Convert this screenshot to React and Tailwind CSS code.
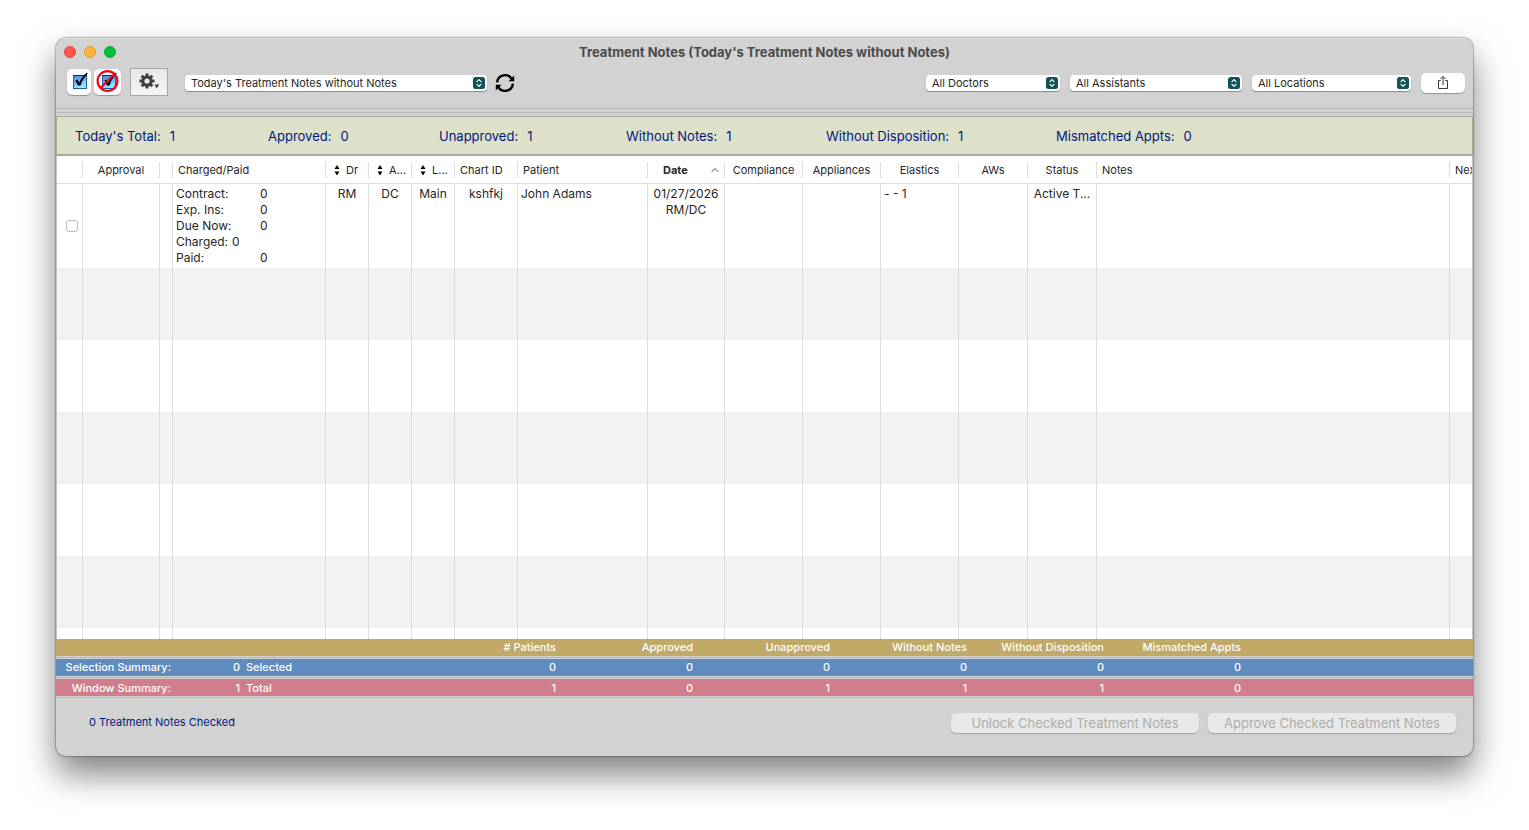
import { useState } from "react";
import clsx from "clsx";

const totals = [
  { label: "Today's Total:", value: 1, width: "w-[193px]" },
  { label: "Approved:", value: 0, width: "w-[171px]" },
  { label: "Unapproved:", value: 1, width: "w-[187px]" },
  { label: "Without Notes:", value: 1, width: "w-[200px]" },
  { label: "Without Disposition:", value: 1, width: "w-[230px]" },
  { label: "Mismatched Appts:", value: 0, width: "w-[140px]" },
];

const columns = [
  { key: "check", label: "", width: "w-[26px]" },
  { key: "approval", label: "Approval", width: "w-[77px]", align: "justify-center" },
  { key: "flag", label: "", width: "w-[13px]" },
  { key: "charged", label: "Charged/Paid", width: "w-[153px]" },
  { key: "dr", label: "Dr", width: "w-[43px]", sortable: true },
  { key: "assistant", label: "A...", width: "w-[43px]", sortable: true },
  { key: "location", label: "L...", width: "w-[43px]", sortable: true },
  { key: "chart", label: "Chart ID", width: "w-[63px]" },
  { key: "patient", label: "Patient", width: "w-[130px]" },
  { key: "date", label: "Date", width: "w-[77px]", sorted: true },
  { key: "compliance", label: "Compliance", width: "w-[78px]", align: "justify-center" },
  { key: "appliances", label: "Appliances", width: "w-[78px]", align: "justify-center" },
  { key: "elastics", label: "Elastics", width: "w-[78px]", align: "justify-center" },
  { key: "aws", label: "AWs", width: "w-[69px]", align: "justify-center" },
  { key: "status", label: "Status", width: "w-[69px]", align: "justify-center" },
  { key: "notes", label: "Notes", width: "" },
  { key: "next", label: "Next", width: "w-[22px]" },
];

const charges = [
  { label: "Contract:", value: 0 },
  { label: "Exp. Ins:", value: 0 },
  { label: "Due Now:", value: 0 },
  { label: "Charged:", value: 0, inline: true },
  { label: "Paid:", value: 0 },
];

const summaryHeads = ["# Patients", "Approved", "Unapproved", "Without Notes", "Without Disposition", "Mismatched Appts"];

const summaryRows = [
  { label: "Selection Summary:", count: 0, unit: "Selected", values: [0, 0, 0, 0, 0, 0], color: "bg-[#5f8bbe] pb-0.5" },
  { label: "Window Summary:", count: 1, unit: "Total", values: [1, 0, 1, 1, 1, 0], color: "bg-[#d07e8b]" },
];

function CheckIcon({ blocked }) {
  return (
    <svg viewBox="0 0 24 24" className="size-6 shrink-0" aria-hidden="true">
      <defs>
        <linearGradient id="checkFill" x1="0" y1="0" x2="0.3" y2="1">
          <stop offset="0" stopColor="#4a86dc" />
          <stop offset="0.5" stopColor="#63b4f4" />
          <stop offset="1" stopColor="#8ff0fc" />
        </linearGradient>
      </defs>
      <rect x="6.5" y="5.5" width="13" height="13" fill="url(#checkFill)" stroke="#2d5f9e" strokeWidth="1" />
      <path d="M6 5.5h14" stroke="#16235c" strokeWidth="1.2" />
      <path d="M8.400 10.600l2-1 1.800 3.200c1.600-4 4.200-7.400 7.600-10l1 .7c-3.400 3.400-5.800 7.200-7.300 12h-2.500z" fill="#000" />
      {blocked && (
        <g fill="none" stroke="#f5051d" strokeWidth="2.2">
          <circle cx="11.5" cy="11" r="9.900" />
          <path d="M18.500 4l-14 14" />
        </g>
      )}
    </svg>
  );
}

function GearIcon() {
  return (
    <svg viewBox="0 0 24 20" className="h-5 w-6" fill="#3f3f3f" aria-hidden="true">
      <circle cx="10" cy="9" r="4.1" fill="none" stroke="#3f3f3f" strokeWidth="3" />
      {[0, 45, 90, 135, 180, 225, 270, 315].map((angle) => (
        <rect key={angle} x="8.5" y="1.5" width="3" height="3.2" transform={`rotate(${angle} 10 9)`} />
      ))}
      <path d="M17.5 12.5h4.600l-2.300 4z" />
    </svg>
  );
}

function RefreshIcon() {
  return (
    <svg viewBox="0 0 20 20" className="size-5" aria-hidden="true">
      <g fill="none" stroke="#000" strokeWidth="2.4">
        <path d="M2.1 9.300a7.900 7.900 0 0 1 14.700-3.200" />
        <path d="M17.900 10.700a7.900 7.900 0 0 1-14.700 3.200" />
      </g>
      <path d="M19.2 2.500v5.700h-5.700zM.8 17.500v-5.700h5.700z" />
    </svg>
  );
}

function ShareIcon() {
  return (
    <svg viewBox="0 0 14 16" className="h-4 w-3.5" fill="none" stroke="#3a3a3a" strokeWidth="1" aria-hidden="true">
      <path d="M4.800 5.500H2.500v8h9v-8H9.200M7 10V1.500M4.500 4L7 1.500 9.500 4" />
    </svg>
  );
}

function PopUp({ label, value, width }) {
  return (
    <div className={clsx("relative h-4", width)}>
      <select
        aria-label={label}
        defaultValue={value}
        className="block h-4 w-full appearance-none rounded-[4px] bg-white pl-1.5 pr-5 text-[11px] leading-4 text-[#262626] shadow-[0_1px_1px_rgba(0,0,0,0.35)]"
      >
        <option>{value}</option>
      </select>
      <svg viewBox="0 0 12 12" className="pointer-events-none absolute right-0.5 top-0.5 size-3" aria-hidden="true">
        <rect width="12" height="12" rx="2.5" fill="#125456" />
        <path d="M4 4.700l2-2 2 2M4 7.300l2 2 2-2" fill="none" stroke="#fff" strokeWidth="1.2" strokeLinecap="round" strokeLinejoin="round" />
      </svg>
    </div>
  );
}

function ColumnHead({ column }) {
  const { label, align, sortable, sorted, key } = column;

  return (
    <th scope="col" className="h-7 overflow-hidden border-b border-[#dedede] p-0 font-normal">
      <div
        className={clsx(
          "flex h-4 items-center whitespace-nowrap",
          key !== "next" && "border-r border-[#dedede]",
          align,
          !align && !sorted && !sortable && "pl-[5px]",
          sortable && "gap-1.5 pl-2",
          sorted && "justify-between pl-[15px] pr-1 font-bold"
        )}
      >
        {sortable && (
          <svg viewBox="0 0 6 12" className="h-3 w-1.5 shrink-0" aria-hidden="true">
            <path d="M3 1l2.500 4h-5zM3 11.500l2.500-4h-5z" />
          </svg>
        )}
        {label}
        {sorted && (
          <svg viewBox="0 0 10 8" className="h-2 w-2.5" fill="none" stroke="#555" aria-hidden="true">
            <path d="M1.500 6L5 2.500 8.500 6" />
          </svg>
        )}
      </div>
    </th>
  );
}

function NotesTable({ checked, onCheck }) {
  const cell = "overflow-hidden whitespace-nowrap border-r border-[#dedede] px-0 pb-0 pt-0.5 align-top last:border-r-0";

  return (
    <div className="min-h-0 flex-1 overflow-hidden border-x border-[#c4c4c4] bg-white">
      <table className="w-full table-fixed border-separate border-spacing-0 text-xs leading-4 text-[#262626]">
        <colgroup>
          {columns.map((column) => (
            <col key={column.key} className={column.width} />
          ))}
        </colgroup>
        <thead className="text-[11px]">
          <tr>
            {columns.map((column) => (
              <ColumnHead key={column.key} column={column} />
            ))}
          </tr>
        </thead>
        <tbody>
          <tr className="h-[84px]">
            <td className="border-r border-[#dedede] p-0 pl-[9px] align-middle">
              <input
                type="checkbox"
                aria-label="Select John Adams"
                checked={checked}
                onChange={(e) => onCheck(e.target.checked)}
                className="block size-3 appearance-none rounded-[3px] border border-[#bdbdbd] bg-white checked:bg-[#125456]"
              />
            </td>
            <td className={cell} />
            <td className={cell} />
            <td className={cell}>
              {charges.map((charge) => (
                <div key={charge.label} className="flex pl-[3px]">
                  <span className={charge.inline ? "w-14" : "w-[84px]"}>{charge.label}</span>
                  <span>{charge.value}</span>
                </div>
              ))}
            </td>
            <td className={clsx(cell, "text-center")}>RM</td>
            <td className={clsx(cell, "text-center")}>DC</td>
            <td className={clsx(cell, "text-center")}>Main</td>
            <td className={clsx(cell, "text-center")}>kshfkj</td>
            <td className={cell}>
              <span className="pl-[3px]">John Adams</span>
            </td>
            <td className={clsx(cell, "text-center")}>
              01/27/2026
              <br />
              RM/DC
            </td>
            <td className={cell} />
            <td className={cell} />
            <td className={cell}>
              <span className="pl-[3px]">- - 1</span>
            </td>
            <td className={cell} />
            <td className={clsx(cell, "text-center")}>Active T...</td>
            <td className={cell} />
            <td className={cell} />
          </tr>
          {/* empty striped rows fill whatever height is left */}
          {Array.from({ length: 20 }, (_, i) => (
            <tr key={i} className="h-[72px] odd:bg-white even:bg-[#f1f3f2]">
              {columns.map((column) => (
                <td key={column.key} className={cell} />
              ))}
            </tr>
          ))}
        </tbody>
      </table>
    </div>
  );
}

function SummaryTable() {
  const cell = "h-5 whitespace-nowrap border-b-3 border-double border-[#d4d4d4] bg-clip-padding px-0 pt-0 font-medium";
  const headCell = "bg-[#c1a968] pb-0.5";

  return (
    <table className="w-full table-fixed border-separate border-spacing-0 bg-[#b6b6b6] text-right text-[11px] leading-[14px] text-white">
      <colgroup>
        <col className="w-[115px]" />
        <col className="w-[69px]" />
        <col className="w-[179px]" />
        {summaryHeads.map((head) => (
          <col key={head} className="w-[137px]" />
        ))}
        <col />
      </colgroup>
      <thead>
        <tr>
          <td colSpan={3} className={clsx(cell, headCell)} />
          {summaryHeads.map((head) => (
            <th key={head} scope="col" className={clsx(cell, headCell)}>
              {head}
            </th>
          ))}
          <td className={clsx(cell, headCell)} />
        </tr>
      </thead>
      <tbody>
        {summaryRows.map((row) => (
          <tr key={row.label}>
            <th scope="row" className={clsx(cell, row.color)}>{row.label}</th>
            <td className={clsx(cell, row.color)}>{row.count}</td>
            <td className={clsx(cell, row.color, "text-left")}>
              <span className="pl-1.5">{row.unit}</span>
            </td>
            {row.values.map((value, i) => (
              <td key={summaryHeads[i]} className={clsx(cell, row.color)}>{value}</td>
            ))}
            <td className={clsx(cell, row.color)} />
          </tr>
        ))}
      </tbody>
    </table>
  );
}

export default function App() {
  const [checked, setChecked] = useState(false);

  const footerButton =
    "h-5 w-[248px] rounded-[5px] bg-[#e8e8e8] text-[13px] leading-5 text-[#acacac] shadow-[0_1px_1px_rgba(0,0,0,0.25)]";

  return (
    <div className="flex h-screen bg-white px-14 pb-[74px] pt-[38px] font-['Inter',sans-serif]">
      <main className="flex min-w-0 flex-1 flex-col overflow-hidden rounded-[10px] bg-[#d2d2d2] shadow-[0_0_1px_1px_rgba(0,0,0,0.25),0_18px_34px_rgba(0,0,0,0.5)]">
        <header className="grid h-[26px] grid-cols-[1fr_auto_1fr] items-center border-t border-[#e2e2e2] px-2">
          <div className="flex gap-2">
            <button type="button" aria-label="Close" className="size-3 rounded-full border border-[#e0443e] bg-[#ff5650]" />
            <button type="button" aria-label="Minimize" className="size-3 rounded-full border border-[#dd9a34] bg-[#ffb339]" />
            <button type="button" aria-label="Zoom" className="size-3 rounded-full border border-[#0ba935] bg-[#02c03c]" />
          </div>
          <h1 className="text-[13px] font-bold leading-4 text-[#4a4a4a]">
            Treatment Notes (Today's Treatment Notes without Notes)
          </h1>
        </header>

        <div className="flex h-[45px] items-center border-b border-[#b9b9b9] pb-2 pl-[11px] pr-2">
          <button type="button" aria-label="Approve" className="flex h-[26px] w-6 items-center justify-center rounded-[5px] bg-white shadow-[0_1px_1px_rgba(0,0,0,0.3)]">
            <CheckIcon />
          </button>
          <button type="button" aria-label="Unapprove" className="ml-[3px] flex h-[26px] w-[27px] items-center justify-center rounded-[5px] bg-white shadow-[0_1px_1px_rgba(0,0,0,0.3)]">
            <CheckIcon blocked />
          </button>
          <button type="button" aria-label="Actions" className="ml-[9px] flex h-7 w-[38px] items-center justify-center border border-[#a6a6a6] bg-linear-to-b from-[#e8e8e8] to-[#f5f5f5]">
            <GearIcon />
          </button>
          <div className="ml-[17px] flex flex-1 items-center gap-2 pt-0.5">
            <PopUp label="View" value="Today's Treatment Notes without Notes" width="w-[302px]" />
            <button type="button" aria-label="Refresh">
              <RefreshIcon />
            </button>
          </div>
          <div className="flex items-center gap-2.5 pt-0.5">
            <PopUp label="Doctor" value="All Doctors" width="w-[134px]" />
            <PopUp label="Assistant" value="All Assistants" width="w-[172px]" />
            <PopUp label="Location" value="All Locations" width="w-[159px]" />
            <button type="button" aria-label="Share" className="flex h-5 w-11 items-center justify-center rounded-[5px] bg-white shadow-[0_1px_1px_rgba(0,0,0,0.3)]">
              <ShareIcon />
            </button>
          </div>
        </div>

        <div className="h-1 border-b border-[#b9b9b9]" />
        <section className="mt-[3px] flex h-10 shrink-0 items-center border border-b-2 border-[#a9ab9b] bg-[#dde1ca] pl-[18px] pt-0.5 text-[13px] text-[#00187f]">
          {totals.map((total) => (
            <div key={total.label} className={clsx("flex gap-[9px] whitespace-nowrap", total.width)}>
              <span>{total.label}</span>
              <span>{total.value}</span>
            </div>
          ))}
        </section>

        <NotesTable checked={checked} onCheck={setChecked} />
        <SummaryTable />

        <footer className="flex h-[57px] items-center gap-[9px] pb-2.5 pl-[33px] pr-[17px]">
          <p className="mr-auto text-[11px] text-[#00187f]">{checked ? 1 : 0} Treatment Notes Checked</p>
          <button type="button" disabled={!checked} className={footerButton}>
            Unlock Checked Treatment Notes
          </button>
          <button type="button" disabled={!checked} className={footerButton}>
            Approve Checked Treatment Notes
          </button>
        </footer>
      </main>
    </div>
  );
}
